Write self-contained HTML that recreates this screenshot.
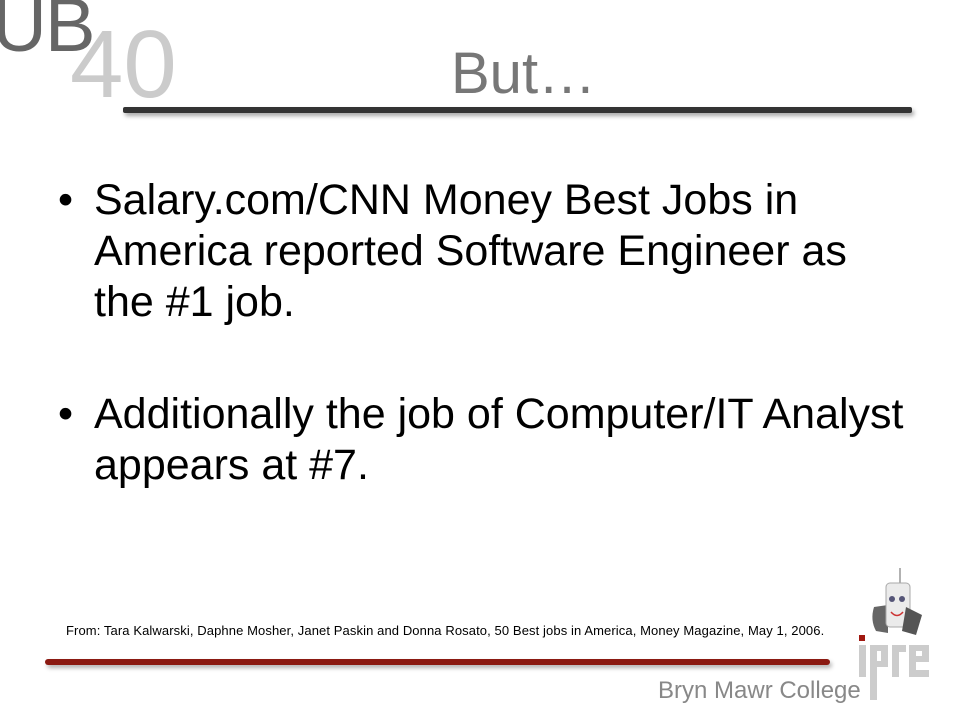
<!DOCTYPE html>
<html><head><style>
body{margin:0;width:960px;height:720px;background:#fff;position:relative;overflow:hidden;font-family:"Liberation Sans",sans-serif}
.a{position:absolute;white-space:nowrap}
</style></head><body>
<div class="a" style="left:-8px;top:-18px;font-size:76px;color:#666;letter-spacing:-2px">UB</div>
<div class="a" style="left:70px;top:10px;font-size:96px;color:#cbcbcb">40</div>
<div class="a" style="left:451px;top:40px;font-size:58px;color:#777">But…</div>
<div class="a" style="left:123px;top:107px;width:789px;height:6px;background:#333;box-shadow:2px 3px 4px rgba(0,0,0,.35);border-radius:2px"></div>
<div class="a" style="left:58px;top:175px;font-size:43px;line-height:51px;color:#000">•</div>
<div class="a" style="left:94px;top:175px;font-size:43px;line-height:51px;color:#000">Salary.com/CNN Money Best Jobs in<br>America reported Software Engineer as<br>the #1 job.</div>
<div class="a" style="left:58px;top:389px;font-size:43px;line-height:51px;color:#000">•</div>
<div class="a" style="left:94px;top:389px;font-size:43px;line-height:51px;color:#000">Additionally the job of Computer/IT Analyst<br>appears at #7.</div>
<div class="a" style="left:66px;top:623px;font-size:13px;color:#000;letter-spacing:0.1px">From: Tara Kalwarski, Daphne Mosher, Janet Paskin and Donna Rosato, 50 Best jobs in America, Money Magazine, May 1, 2006.</div>
<div class="a" style="left:45px;top:659px;width:785px;height:6px;background:#8b1a12;box-shadow:2px 3px 4px rgba(0,0,0,.3);border-radius:3px"></div>
<div class="a" style="left:658px;top:677px;font-size:24px;color:#888">Bryn Mawr College</div>
<svg class="a" style="left:850px;top:565px" width="110" height="140" viewBox="0 0 110 140">
<line x1="50" y1="3" x2="50" y2="20" stroke="#999" stroke-width="1.5"/>
<path d="M24 42 Q20 55 26 66 L38 68 L38 40 Z" fill="#666"/>
<rect x="36" y="18" width="24" height="44" rx="4" fill="#ebebeb" stroke="#aaa"/>
<circle cx="42" cy="34" r="3" fill="#557"/><circle cx="52" cy="34" r="3" fill="#557"/>
<path d="M41 47 Q47 54 53 47" stroke="#c33" stroke-width="1.5" fill="none"/>
<path d="M56 42 L72 50 L66 70 L52 66 Z" fill="#555"/>
<rect x="9" y="70" width="6" height="6" fill="#a01810"/>
<rect x="9" y="80" width="7" height="32" fill="#ccc"/>
<path d="M20 80 h18 v22 h-11 v33 h-7 Z M27 86 v10 h4 v-10 Z" fill="#ccc" fill-rule="evenodd"/>
<path d="M42 80 h14 v7 h-7 v25 h-7 Z" fill="#ccc"/>
<path d="M59 80 h20 v17 h-13 v8 h13 v7 h-20 Z M66 86 v5 h6 v-5 Z" fill="#ccc" fill-rule="evenodd"/>
</svg>
</body></html>
